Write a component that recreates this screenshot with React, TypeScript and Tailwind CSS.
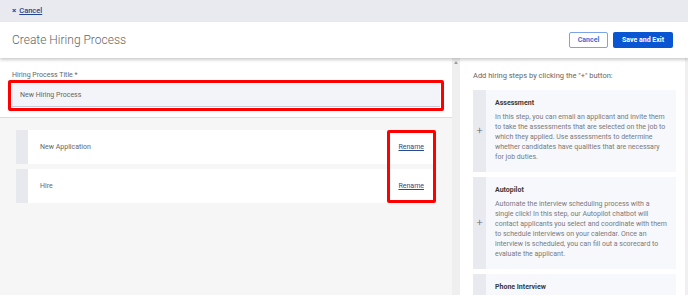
import React from "react";

type Step = {
  title: string;
  lines: string[];
};

const steps: Step[] = [
  {
    title: "Assessment",
    lines: [
      "In this step, you can email an applicant and invite them",
      "to take the assessments that are selected on the job to",
      "which they applied. Use assessments to determine",
      "whether candidates have qualities that are necessary",
      "for job duties.",
    ],
  },
  {
    title: "Autopilot",
    lines: [
      "Automate the interview scheduling process with a",
      "single click! In this step, our Autopilot chatbot will",
      "contact applicants you select and coordinate with them",
      "to schedule interviews on your calendar. Once an",
      "interview is scheduled, you can fill out a scorecard to",
      "evaluate the applicant.",
    ],
  },
  {
    title: "Phone Interview",
    lines: [
      "In this step, you can call an applicant and conduct a",
      "phone interview to learn more about their experience.",
    ],
  },
];

const stages = ["New Application", "Hire"];

const StepCard = ({ title, lines }: Step) => (
  <div className="flex shrink-0">
    <div className="flex w-[13px] shrink-0 items-center justify-center bg-[#e9eaef] text-[11px] font-light text-[#666]">
      +
    </div>
    <div className="flex-1 bg-[#f7f8fc] pb-[10px] pl-[9px] pr-[6px] pt-[9px]">
      <div className="text-[7px] font-bold leading-[9px] text-[#3a3a3a]">
        {title}
      </div>
      <p className="mt-[4px] text-[7px] leading-[10px] text-[#7a7a7a]">
        {lines.map((l) => (
          <span key={l} className="block whitespace-nowrap">
            {l}
          </span>
        ))}
      </p>
    </div>
  </div>
);

const StageRow = ({ name }: { name: string }) => (
  <div className="flex h-[34px]">
    <div className="w-[12px] bg-[#e8e9ee]" />
    <div className="flex flex-1 items-center justify-between bg-white pl-3 pr-[9px]">
      <span className="text-[7px] text-[#666]">{name}</span>
      <a href="#" className="text-[7px] text-[#2a4a92] underline">
        Rename
      </a>
    </div>
  </div>
);

export default function App() {
  return (
    <div className="flex h-[295px] w-[688px] flex-col overflow-hidden bg-white font-['Roboto',sans-serif]">
      {/* Cancel bar */}
      <div className="flex h-[22px] shrink-0 items-center gap-[3px] bg-[#e9eaef] px-3">
        <span className="text-[8px] font-bold leading-none text-[#22468f]">×</span>
        <a href="#" className="text-[7.5px] font-medium text-[#22468f] underline">
          Cancel
        </a>
      </div>

      {/* Header */}
      <div className="relative z-10 flex h-[36px] shrink-0 items-center justify-between bg-white pl-3 pr-[15px] shadow-[0_2px_3px_rgba(0,0,0,0.2)]">
        <h1 className="text-[12px] font-light text-[#666]">
          Create Hiring Process
        </h1>
        <div className="flex gap-[5px]">
          <button className="h-[16px] w-[39px] rounded-[2px] border border-[#7aa3e8] bg-white text-[7px] font-bold text-[#3b6fd4]">
            Cancel
          </button>
          <button className="h-[16px] w-[60px] rounded-[2px] bg-[#0a55d2] text-[7px] font-bold text-white">
            Save and Exit
          </button>
        </div>
      </div>

      <div className="flex min-h-0 flex-1">
        {/* Left side */}
        <div className="flex w-[452px] flex-col bg-[#f6f6f6]">
          <div className="h-[60px] border-b border-[#dcdcdc] bg-white pt-[13px]">
            <label className="block pl-3 text-[7px] leading-[9px] text-[#666]">
              Hiring Process Title *
            </label>
            <div className="ml-2 w-[436px] rounded-[2px] border-[3px] border-[#ff0000] p-px">
              <input
                readOnly
                value="New Hiring Process"
                className="block h-[23px] w-full border-b border-[#c9ccd6] bg-[#f3f4f9] pl-2 text-[7px] text-[#666] outline-none"
              />
            </div>
          </div>

          <div className="relative ml-4 mt-3 flex w-[417px] flex-col gap-[5px]">
            {stages.map((s) => (
              <StageRow key={s} name={s} />
            ))}
            {/* highlight */}
            <div className="absolute left-[371px] top-0 h-[73px] w-[49px] rounded-[2px] border-[3px] border-[#ff0000]" />
          </div>
        </div>

        {/* Scrollbar */}
        <div className="flex w-[8px] justify-center bg-[#efefef] pt-[3px]">
          <div className="h-0 w-0 border-x-[2px] border-b-[3px] border-x-transparent border-b-[#a0a0a0]" />
        </div>

        {/* Right side */}
        <div className="flex flex-1 flex-col gap-[5px] border-r-[3px] border-[#f0f0f0] pl-[13px] pr-[9px] pt-[13px]">
          <p className="mb-[4px] text-[7.5px] leading-[10px] text-[#666]">
            Add hiring steps by clicking the "+" button:
          </p>
          {steps.map((s) => (
            <StepCard key={s.title} {...s} />
          ))}
        </div>
      </div>
    </div>
  );
}
